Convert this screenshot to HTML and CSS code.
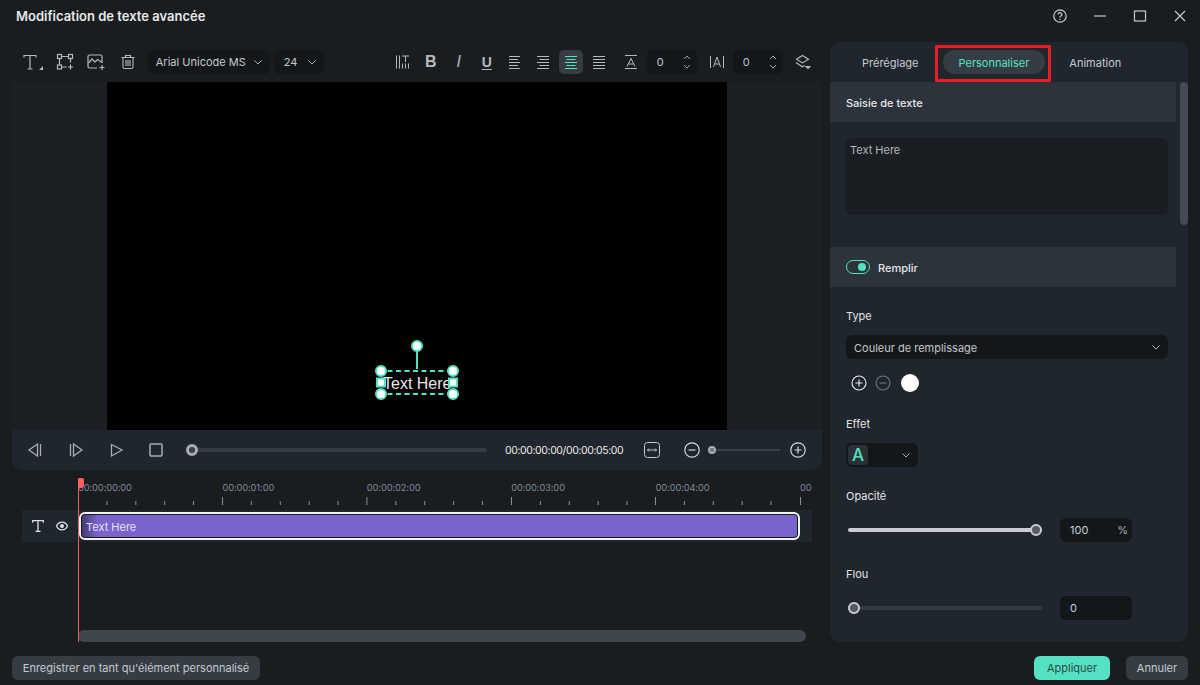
FILE: index.html
```html
<!DOCTYPE html>
<html lang="fr">
<head>
<meta charset="utf-8">
<title>Modification de texte avancée</title>
<link rel="stylesheet" href="styles.css">
</head>
<body>
<div class="app">
  <header class="titlebar">
    <h1 class="title">Modification de texte avancée</h1>
    <div class="winctl">
      <svg width="16" height="16" viewBox="0 0 16 16" fill="none" stroke="#c4c8cc" stroke-width="1.2"><circle cx="8" cy="8" r="6.2"/><path d="M6.2 6.4a1.8 1.8 0 1 1 2.7 1.6c-.6.4-.9.7-.9 1.4"/><path d="M8 10.8v1.2"/></svg>
      <svg width="16" height="16" viewBox="0 0 16 16" fill="none" stroke="#c4c8cc" stroke-width="1.2"><path d="M2 8h12"/></svg>
      <svg width="16" height="16" viewBox="0 0 16 16" fill="none" stroke="#c4c8cc" stroke-width="1.2"><rect x="2.5" y="3" width="11" height="10"/></svg>
      <svg width="16" height="16" viewBox="0 0 16 16" fill="none" stroke="#c4c8cc" stroke-width="1.2"><path d="M3 3l10 10M13 3L3 13"/></svg>
    </div>
  </header>

  <main class="main">
    <section class="left">
      <div class="toolbar">
        <div class="tb-group first">
          <button class="ib"><svg width="22" height="22" viewBox="0 0 22 22" fill="none" stroke="#b4b9be" stroke-width="1.2"><path d="M2 6.500V4.500h12v2M8 4.500V18M5.500 18h5"/><path d="M21 15v4h-4z" fill="#b4b9be" stroke="none"/></svg></button>
          <button class="ib"><svg width="18" height="18" viewBox="0 0 18 18" fill="none" stroke="#b4b9be" stroke-width="1.2"><rect x="1.500" y="1.500" width="4" height="4"/><rect x="12.500" y="1.500" width="4" height="4"/><rect x="1.500" y="12" width="4" height="4"/><path d="M5.500 3.500h7M3.500 5.500V12M14.500 5.500v4M5.500 14h5M14.500 11.500v5M12 14h5"/></svg></button>
          <button class="ib"><svg width="18" height="18" viewBox="0 0 18 18" fill="none" stroke="#b4b9be" stroke-width="1.2"><path d="M10 15H2.500a1.500 1.500 0 0 1-1.500-1.500v-10A1.500 1.500 0 0 1 2.500 2h11A1.500 1.500 0 0 1 15 3.500V10"/><path d="M1.500 10l3.500-4 3 3 2.500-2.500 4.500 3"/><path d="M15 12v5M12.500 14.500h5"/></svg></button>
          <button class="ib"><svg width="16" height="16" viewBox="0 0 16 16" fill="none" stroke="#b4b9be" stroke-width="1.1"><path d="M1.500 3.500h13M5.500 3.500V1.500h5v2M3 3.500V13a1.500 1.500 0 0 0 1.500 1.500h7A1.500 1.500 0 0 0 13 13V3.500M6 6v6M8 6v6M10 6v6"/></svg></button>
        </div>
        <div class="select font-sel"><span>Arial Unicode MS</span><svg class="chev" width="10" height="10" viewBox="0 0 10 10"><path d="M1.500 3.500L5 7l3.500-3.500"/></svg></div>
        <div class="select size-sel"><span>24</span><svg class="chev" width="10" height="10" viewBox="0 0 10 10"><path d="M1.500 3.500L5 7l3.500-3.500"/></svg></div>
        <div class="tb-group right">
          <button class="ib"><svg width="16" height="16" viewBox="0 0 16 16" fill="none" stroke="#b4b9be" stroke-width="1"><path d="M1.500 1.500v13M4.500 1.500v13M7.500 9.500v5M10.500 9.500v5M13.500 9.500v5M7 2h7M10.500 2v6"/></svg></button>
          <button class="ib glyph bold">B</button>
          <button class="ib glyph ital">I</button>
          <button class="ib glyph under">U</button>
          <button class="ib"><svg width="14" height="14" viewBox="0 0 14 14" stroke="#b4b9be"><path d="M1 1.500h11M1 4.500h9M1 7.500h11M1 10.500h9M1 13.500h11"/></svg></button>
          <button class="ib"><svg width="14" height="14" viewBox="0 0 14 14" stroke="#b4b9be"><path d="M1 1.500h12M3.500 4.500h9.500M1 7.500h12M3.500 10.500h9.500M1 13.500h12"/></svg></button>
          <button class="ib on"><svg width="14" height="14" viewBox="0 0 14 14" stroke="#55e2c2"><path d="M1 1.500h12M2.500 4.500h9M1 7.500h12M2.500 10.500h9M1 13.500h12"/></svg></button>
          <button class="ib"><svg width="14" height="14" viewBox="0 0 14 14" stroke="#b4b9be"><path d="M1 1.500h12M1 4.500h12M1 7.500h12M1 10.500h12M1 13.500h12"/></svg></button>
          <button class="ib gap-l"><svg width="14" height="16" viewBox="0 0 14 16" fill="none" stroke="#b4b9be" stroke-width="1"><path d="M1 1.500h12M1 14.500h12M3 12.500l4-8 4 8M4.500 10h5"/></svg></button>
          <div class="num"><span class="num-v">0</span><svg width="10" height="16" viewBox="0 0 10 16" fill="none" stroke="#9aa0a6"><path d="M2 5l3-3 3 3M2 11l3 3 3-3"/></svg></div>
          <button class="ib gap-s"><svg width="16" height="14" viewBox="0 0 16 14" fill="none" stroke="#b4b9be" stroke-width="1"><path d="M1.500 1v12M14.500 1v12M4.500 12l3.500-10 3.500 10M5.500 9h5"/></svg></button>
          <div class="num"><span class="num-v">0</span><svg width="10" height="16" viewBox="0 0 10 16" fill="none" stroke="#9aa0a6"><path d="M2 5l3-3 3 3M2 11l3 3 3-3"/></svg></div>
          <button class="ib gap-s"><svg width="16" height="16" viewBox="0 0 16 16" fill="none" stroke="#b4b9be" stroke-width="1.200"><path d="M7.500 1.500l6 3.700-6 3.700-6-3.700zM2 8.500l-.5.500 6 3.700 2-1.200"/><path d="M11 12.500h4l-2 2z" fill="#b4b9be"/></svg></button>
        </div>
      </div>

      <div class="stage">
        <div class="canvas">
          <span class="canvas-text">Text Here</span>
          <svg class="sel" width="92" height="64" viewBox="0 0 92 64" fill="none">
            <path d="M46 10v21" stroke="#55e2c2" stroke-width="2"/>
            <path d="M8 33h72M8 56h72" stroke="#55e2c2" stroke-width="2" stroke-dasharray="5 3.500"/>
            <g fill="#fff" stroke="#55e2c2" stroke-width="2">
              <circle cx="46" cy="8" r="5"/>
              <circle cx="10" cy="33" r="5"/><circle cx="82" cy="33" r="5"/>
              <circle cx="10" cy="56" r="5"/><circle cx="82" cy="56" r="5"/>
              <rect x="6" y="40.500" width="8" height="8"/><rect x="78" y="40.500" width="8" height="8"/>
            </g>
          </svg>
        </div>
      </div>

      <div class="transport">
        <svg class="t-prev" width="16" height="16" viewBox="0 0 16 16" fill="none" stroke="#a9adb2" stroke-width="1.300"><path d="M10.500 2L2 8l8.500 6zM13.500 2v12"/></svg>
        <svg class="t-next" width="16" height="16" viewBox="0 0 16 16" fill="none" stroke="#a9adb2" stroke-width="1.300"><path d="M5.500 2L14 8l-8.500 6zM2.500 2v12"/></svg>
        <svg class="t-play" width="16" height="16" viewBox="0 0 16 16" fill="none" stroke="#a9adb2" stroke-width="1.300"><path d="M3.500 2.500L14 8 3.500 14z"/></svg>
        <svg class="t-stop" width="16" height="16" viewBox="0 0 16 16" fill="none" stroke="#a9adb2" stroke-width="1.500"><rect x="2" y="2" width="12" height="12" rx="1"/></svg>
        <div class="seek"><i class="knob"></i></div>
        <div class="tc">00:00:00:00/00:00:05:00</div>
        <svg class="fit" width="16" height="16" viewBox="0 0 16 16" fill="none" stroke="#c4c8cc" stroke-width="1"><rect x=".5" y=".5" width="15" height="15" rx="3"/><path d="M3.500 8h9M5 6.500L3.500 8 5 9.500M11 6.500L12.500 8 11 9.500"/></svg>
        <svg class="zm" width="16" height="16" viewBox="0 0 16 16" fill="none" stroke="#d8dadd" stroke-width="1.200"><circle cx="8" cy="8" r="7.200"/><path d="M4.500 8h7"/></svg>
        <div class="zoomtrack"><i class="zknob"></i></div>
        <svg class="zp" width="16" height="16" viewBox="0 0 16 16" fill="none" stroke="#d8dadd" stroke-width="1.200"><circle cx="8" cy="8" r="7.200"/><path d="M4.500 8h7M8 4.500v7"/></svg>
      </div>

      <div class="timeline">
        <div class="playhead"></div>
        <div class="ruler">
          <span>00:00:00:00</span><span>00:00:01:00</span><span>00:00:02:00</span><span>00:00:03:00</span><span>00:00:04:00</span><span>00</span>
        </div>
        <svg class="ticks" width="734" height="8" viewBox="0 0 734 8" stroke="#8a8f94">
          <path d="M28.900 4v4M57.800 4v4M86.600 4v4M115.500 4v4M144.500 0v8M173.400 4v4M202.300 4v4M231.200 4v4M260 4v4M288.900 0v8M317.800 4v4M346.700 4v4M375.600 4v4M404.500 4v4M433.500 0v8M462.400 4v4M491.300 4v4M520.200 4v4M549 4v4M577.500 0v8M606.400 4v4M635.300 4v4M664.200 4v4M693 4v4M722.500 0v8"/>
        </svg>
        <div class="track">
          <div class="track-head">
            <svg width="12" height="12" viewBox="0 0 12 12" fill="none" stroke="#dcdee0" stroke-width="1.300"><path d="M.7 2.800V.7h10.600v2.100M6 .7v10.600M3.500 11.300h5"/></svg>
            <svg width="14" height="12" viewBox="0 0 14 12" fill="#dcdee0"><path d="M7 1.500C4 1.500 1.800 3.500.7 6 1.800 8.500 4 10.500 7 10.500S12.200 8.500 13.300 6C12.200 3.500 10 1.500 7 1.500zm0 1.200c2.100 0 3.900 1.300 4.900 3.300-1 2-2.800 3.300-4.900 3.300S3.100 8 2.100 6c1-2 2.800-3.300 4.900-3.300z"/><circle cx="7" cy="6" r="2"/></svg>
          </div>
          <div class="clip"><span>Text Here</span></div>
        </div>
        <div class="hscroll"></div>
      </div>
    </section>

    <aside class="panel">
      <div class="tabs">
        <span class="tab">Préréglage</span>
        <span class="tab active">Personnaliser</span>
        <span class="tab">Animation</span>
      </div>
      <div class="vscroll"></div>
      <div class="sec-head"><span>Saisie de texte</span></div>
      <div class="textarea">Text Here</div>
      <div class="sec-head fill-head"><i class="toggle"></i><span>Remplir</span></div>
      <div class="fields">
        <div class="label l-type">Type</div>
        <div class="select wide"><span>Couleur de remplissage</span><svg class="chev" width="10" height="10" viewBox="0 0 10 10"><path d="M1.500 3.500L5 7l3.500-3.500"/></svg></div>
        <div class="colors">
          <svg width="16" height="16" viewBox="0 0 16 16" fill="none" stroke="#e8eaed" stroke-width="1.100"><circle cx="8" cy="8" r="7"/><path d="M4.500 8h7M8 4.500v7"/></svg>
          <svg width="16" height="16" viewBox="0 0 16 16" fill="none" stroke="#70757a" stroke-width="1.100"><circle cx="8" cy="8" r="7"/><path d="M4.500 8h7"/></svg>
          <i class="swatch"></i>
        </div>
        <div class="label l-effet">Effet</div>
        <div class="effect"><b class="a-box">A</b><svg class="chev" width="10" height="10" viewBox="0 0 10 10"><path d="M1.500 3.500L5 7l3.500-3.500"/></svg></div>
        <div class="label l-op">Opacité</div>
        <div class="slider-row">
          <div class="slider full"><i class="sknob"></i></div>
          <div class="val"><span>100</span><em>%</em></div>
        </div>
        <div class="label l-flou">Flou</div>
        <div class="slider-row">
          <div class="slider empty"><i class="sknob"></i></div>
          <div class="val"><span>0</span></div>
        </div>
      </div>
    </aside>
  </main>

  <footer class="footer">
    <button class="btn save">Enregistrer en tant qu'élément personnalisé</button>
    <div class="foot-right">
      <button class="btn apply">Appliquer</button>
      <button class="btn cancel">Annuler</button>
    </div>
  </footer>
</div>
</body>
</html>
```

FILE: styles.css
```css
* { box-sizing: border-box; }
html, body { margin: 0; height: 685px; overflow: hidden; background: #1a1d20; }
body { font-family: "Inter", "Noto Sans", sans-serif; font-size: 11px; color: #d5d8db; }
button { font: inherit; border: 0; padding: 0; background: none; color: inherit; }
.app { width: 1200px; height: 685px; display: flex; flex-direction: column; }

.titlebar { height: 42px; flex: none; display: flex; justify-content: space-between; padding: 8px 12px 0 16px; }
.title { margin: 0; font-size: 13px; line-height: 17px; font-weight: 600; color: #e6e8ea; }
.winctl { display: flex; gap: 24px; height: 16px; }

.main { flex: none; height: 600px; display: flex; padding: 0 12px; gap: 8px; }
.left { width: 810px; flex: none; display: flex; flex-direction: column; }

.toolbar { height: 40px; flex: none; display: flex; align-items: center; padding-left: 9px; }
.tb-group { display: flex; align-items: center; }
.tb-group.first { gap: 7.600px; margin-right: 8px; }
.tb-group.right { gap: 4px; margin-left: 67px; }
.ib { width: 24px; height: 24px; display: flex; align-items: center; justify-content: center; border-radius: 5px; flex: none; }
.ib.on { background: #363c41; }
.ib.gap-l { margin-left: 4px; }
.ib.gap-s { margin-left: 4px; }
.glyph { color: #b4b9be; font-family: "Liberation Sans", sans-serif; }
.bold { font-weight: 700; font-size: 16px; }
.ital { font-style: italic; font-size: 16px; }
.under { text-decoration: underline; font-weight: 700; font-size: 14px; text-underline-offset: 2px; }

.select { height: 24px; background: #14171a; border-radius: 6px; display: flex; align-items: center; justify-content: space-between; color: #c3c7cb; font-size: 11px; white-space: nowrap; }
.font-sel { width: 122px; padding: 0 7px 0 8px; margin-right: 4px; }
.size-sel { width: 50px; padding: 0 7px 0 10px; }
.chev { fill: none; stroke: #a9adb2; stroke-width: 1; flex: none; }
.num { width: 50px; height: 24px; background: #14171a; border-radius: 6px; display: flex; align-items: center; justify-content: space-between; padding: 0 5px 0 10px; }
.num-v { color: #b7c8da; font-size: 11px; }

.stage { height: 348px; flex: none; background: #1c2024; display: flex; justify-content: center; }
.canvas { width: 620px; height: 348px; background: #000; position: relative; }
.canvas-text { position: absolute; left: 276px; top: 293px; font: 16px/18px "Liberation Sans", sans-serif; color: #e8e8e8; white-space: nowrap; }
.sel { position: absolute; left: 264px; top: 256px; }

.transport { height: 40px; flex: none; background: #20262d; border-radius: 0 0 10px 10px; display: flex; align-items: center; padding-left: 15px; }
.t-next { margin-left: 25px; }
.t-play { margin-left: 24px; }
.t-stop { margin-left: 24px; }
.seek { width: 301px; height: 4px; background: #353b43; border-radius: 2px; position: relative; margin-left: 22px; }
.knob { position: absolute; left: 0; top: -4px; width: 12px; height: 12px; border: 3px solid #a9adb2; border-radius: 50%; background: #3c4046; }
.tc { font-size: 10.500px; letter-spacing: -.41px; color: #ece9e2; white-space: nowrap; margin-left: 18px; width: 119px; }
.fit { margin-left: 20px; }
.zm { margin-left: 24px; }
.zoomtrack { width: 72px; height: 2px; background: #3b4148; position: relative; margin-left: 8px; }
.zknob { position: absolute; left: 0; top: -3px; width: 8px; height: 8px; border-radius: 50%; background: #6c7075; border: 2px solid #a9adb2; }
.zp { margin-left: 10px; }

.timeline { flex: 1; position: relative; padding-top: 8px; }
.playhead { position: absolute; left: 66px; top: 8px; bottom: 0; width: 1px; background: #f25d5d; z-index: 2; }
.playhead::before { content: ""; position: absolute; left: 0; top: 0; width: 6px; height: 10px; background: #fb5f5f; border-radius: 2px 2px 3px 0; }
.ruler { margin-left: 66px; height: 19px; display: flex; font-size: 9.300px; letter-spacing: -.1px; line-height: 20px; color: #7d8a97; white-space: nowrap; overflow: hidden; width: 734px; }
.ruler span { width: 144.400px; flex: none; }
.ticks { display: block; margin-left: 66px; }
.track { margin: 5px 0 0 10px; width: 790px; height: 32px; background: #20262d; display: flex; }
.track-head { width: 56px; flex: none; display: flex; align-items: center; gap: 11px; padding-left: 10px; }
.clip { width: 721px; margin: 2px 0 0 1px; height: 28px; border: 2px solid #f2f3f5; border-radius: 6px; background: linear-gradient(90deg, #3e3870, #7864ca 16px); box-shadow: inset 0 0 0 1px #17191c; display: flex; align-items: center; padding-left: 5px; color: #eadff7; font-size: 11px; }
.clip span { padding-top: 2px; }
.hscroll { position: absolute; left: 66px; bottom: 0; width: 728px; height: 12px; background: #40464d; border-radius: 6px; }

.panel { width: 358px; flex: none; background: #20262d; border-radius: 10px; position: relative; }
.tabs { height: 40px; display: flex; align-items: center; padding-left: 32px; width: 346px; }
.tab { color: #c5cad0; font-size: 11px; white-space: nowrap; padding-top: 2px; }
.tab.active { position: relative; margin: 0 24px; padding: 0 16px; height: 24px; line-height: 26px; border-radius: 12px; background: #363c43; color: #55e2c2; }
.tab.active::after { content: ""; position: absolute; left: -8px; right: -6px; top: -5px; bottom: -8px; border: 3px solid #ed1c24; border-radius: 1px; }
.vscroll { position: absolute; right: 0; top: 40px; width: 8px; height: 143px; background: #454b52; border-radius: 4px; }
.sec-head { width: 346px; height: 40px; background: #2d333a; display: flex; align-items: center; padding-left: 16px; font-size: 11px; font-weight: 500; color: #e6e8ea; }
.sec-head span { padding-top: 2px; }
.textarea { margin: 16px 0 0 16px; width: 322px; height: 77px; background: #1a1e22; border-radius: 6px; padding: 4px; color: #b0b5ba; font-size: 11px; line-height: 16px; }
.fill-head { margin-top: 32px; gap: 8px; }
.toggle { width: 24px; height: 14px; border: 1px solid #55e2c2; border-radius: 7px; position: relative; }
.toggle::after { content: ""; position: absolute; right: 3px; top: 2px; width: 8px; height: 8px; border-radius: 50%; background: #55e2c2; }
.fields { padding-left: 16px; width: 346px; }
.label { color: #e2e4e6; font-size: 11px; line-height: 16px; }
.l-type { margin: 21px 0 11px; }
.wide { width: 322px; padding: 0 7px 0 8px; }
.wide span { padding-top: 2px; }
.colors { display: flex; align-items: center; gap: 8px; height: 20px; margin: 14px 0 0 5px; }
.swatch { width: 18px; height: 18px; border-radius: 50%; background: #fff; margin-left: 2px; }
.l-effet { margin: 23px 0 11px; }
.effect { width: 72px; height: 24px; background: #14171a; border-radius: 6px; display: flex; align-items: center; justify-content: space-between; padding: 0 7px 0 2px; }
.a-box { width: 20px; height: 20px; background: #2b3137; border-radius: 4px; color: #55e2c2; font: 500 17px/20px "Inter", sans-serif; text-align: center; }
.l-op { margin: 21px 0 14px; }
.slider-row { display: flex; align-items: center; gap: 18px; height: 24px; }
.slider { width: 194px; height: 4px; border-radius: 2px; margin-left: 2px; position: relative; }
.slider.full { background: #c9cdd1; }
.slider.empty { background: #343a41; }
.sknob { position: absolute; top: -4px; width: 12px; height: 12px; border-radius: 50%; border: 2px solid #c9cdd1; background: #555b61; }
.full .sknob { right: 0; }
.empty .sknob { left: 0; }
.val { width: 72px; height: 24px; background: #14171a; border-radius: 6px; display: flex; align-items: center; justify-content: space-between; padding: 0 4px 0 10px; color: #c3d0dc; font-size: 11px; }
.val em { font-style: normal; color: #a9adb2; }
.l-flou { margin: 24px 0 14px; }

.footer { flex: none; display: flex; justify-content: space-between; padding: 14px 12px 0; }
.foot-right { display: flex; gap: 16px; }
.btn { height: 24px; border-radius: 6px; font-size: 11px; text-align: center; }
.save { width: 248px; background: #363c43; color: #c5cad0; }
.apply { width: 76px; background: #55e2c2; color: #2e4a48; }
.cancel { width: 62px; background: #363c43; color: #c5cad0; }
```
